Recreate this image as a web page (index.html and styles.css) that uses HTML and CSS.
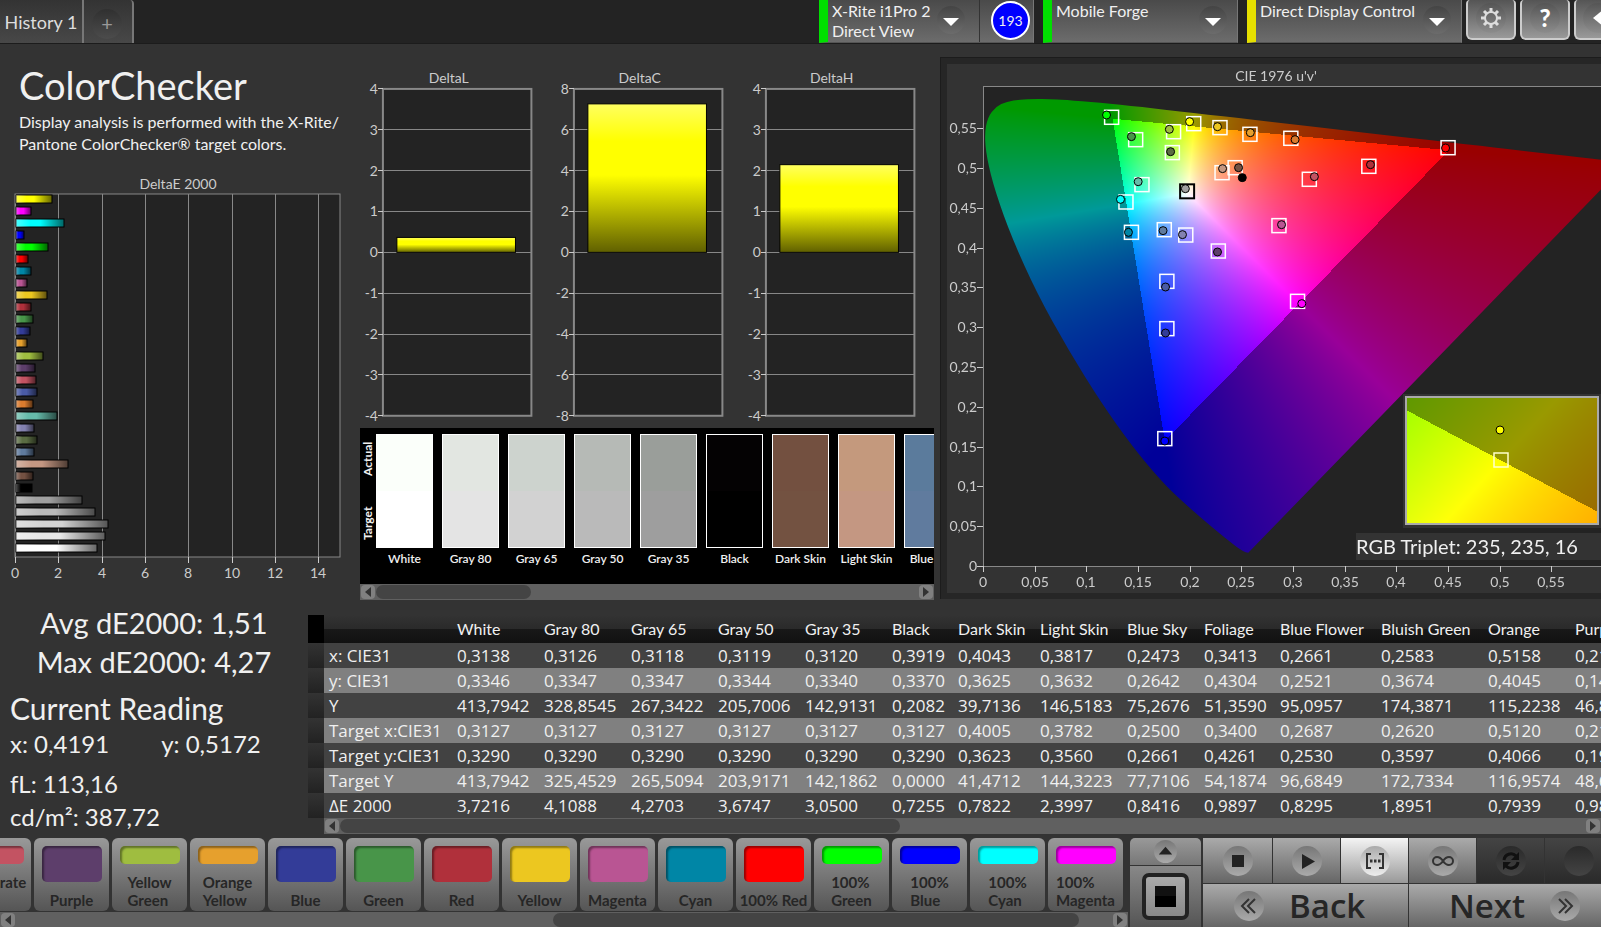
FILE: index.html
```html
<!DOCTYPE html>
<html lang="en">
<head>
    <meta charset="UTF-8">
    <meta name="viewport" content="width=device-width, initial-scale=1.0">
    <title>ColorChecker</title>
    <link rel="stylesheet" href="styles.css">
</head>
<body>

<header class="topbar">
    <nav class="tabs">
        <button class="tab">History 1</button>
        <button class="tab tab-add" aria-label="Add tab"><span class="plus">+</span></button>
    </nav>

    <div class="devices">
        <div class="device device-meter">
            <div class="device-text">
                <select class="device-select" aria-label="Meter"><option>X-Rite i1Pro 2</option></select>
                <span>Direct View</span>
            </div>
            <span class="arrow"></span>
            <div class="badge-cell"><span class="badge">193</span></div>
        </div>
        <div class="device device-source">
            <div class="device-text">
                <select class="device-select" aria-label="Source"><option>Mobile Forge</option></select>
            </div>
            <span class="arrow"></span>
        </div>
        <div class="device device-display">
            <div class="device-text">
                <select class="device-select" aria-label="Display"><option>Direct Display Control</option></select>
            </div>
            <span class="arrow"></span>
        </div>
        <div class="tools">
            <button class="tool" aria-label="Settings">
                <svg class="icon" viewBox="0 0 30 30">
                    <circle cx="15" cy="15" r="6" fill="none" stroke="#ddd" stroke-width="2"/>
                    <path d="M15 5v4M15 21v4M5 15h4M21 15h4M8 8l3 3M19 19l3 3M22 8l-3 3M11 19l-3 3" stroke="#ddd" stroke-width="3"/>
                </svg>
            </button>
            <button class="tool" aria-label="Help"><span class="icon help">?</span></button>
            <button class="tool tool-last" aria-label="Collapse">
                <svg class="icon" viewBox="0 0 30 30"><path d="M20 7v16L10 15z" fill="#fff"/></svg>
            </button>
        </div>
    </div>
</header>

<main>
    <section class="top">
        <div class="summary">
            <h1>ColorChecker</h1>
            <p>Display analysis is performed with the X-Rite/<br>Pantone ColorChecker® target colors.</p>
            <svg id="deltaE" class="chart" viewBox="0 0 360 410"></svg>
        </div>

        <div class="middle">
            <div class="deltas">
                <svg id="deltaL" class="chart" viewBox="0 0 192 356"></svg>
                <svg id="deltaC" class="chart" viewBox="0 0 192 356"></svg>
                <svg id="deltaH" class="chart" viewBox="0 0 192 356"></svg>
            </div>
            <div class="compare">
                <div class="compare-side"><span>Target</span><span>Actual</span></div>
                <div class="compare-list" id="compare"></div>
            </div>
            <div class="scrollbar">
                <button class="scroll-btn" aria-label="Scroll left"></button>
                <div class="track"><div class="thumb thumb-compare"></div></div>
                <button class="scroll-btn scroll-right" aria-label="Scroll right"></button>
            </div>
        </div>

        <div class="cie">
            <div class="cie-inner">
                <canvas id="gamut" width="654" height="529"></canvas>
                <svg id="cieChart" class="chart" viewBox="0 0 654 529"></svg>
            </div>
        </div>
    </section>

    <section class="bottom">
        <div class="readings">
            <div class="stat">Avg dE2000: 1,51</div>
            <div class="stat">Max dE2000: 4,27</div>
            <h2>Current Reading</h2>
            <div class="pair"><span>x: 0,4191</span><span>y: 0,5172</span></div>
            <div class="lum">
                <div>fL: 113,16</div>
                <div>cd/m²: 387,72</div>
            </div>
        </div>
        <div class="data">
            <div class="table-wrap">
                <table id="values"></table>
            </div>
            <div class="scrollbar scrollbar-table">
                <button class="scroll-btn" aria-label="Scroll left"></button>
                <div class="track"><div class="thumb thumb-table"></div></div>
                <button class="scroll-btn scroll-right" aria-label="Scroll right"></button>
            </div>
        </div>
    </section>
</main>

<footer class="controls">
    <div class="patches">
        <div class="patch-list" id="patches"></div>
        <div class="scrollbar">
            <button class="scroll-btn" aria-label="Scroll left"></button>
            <div class="track"><div class="thumb thumb-patches"></div></div>
            <button class="scroll-btn scroll-right" aria-label="Scroll right"></button>
        </div>
    </div>

    <div class="pattern">
        <button class="pattern-up" aria-label="Show patterns">
            <svg class="round-sm" viewBox="0 0 24 24"><path d="M5 15l7-8 7 8z" fill="#222"/></svg>
        </button>
        <button class="pattern-window" aria-label="Window pattern"><span class="window-icon"></span></button>
    </div>

    <div class="transport">
        <div class="play-row">
            <button aria-label="Stop"><svg class="round" viewBox="0 0 30 30"><path d="M9 9h12v12H9z" fill="#222"/></svg></button>
            <button aria-label="Play"><svg class="round" viewBox="0 0 30 30"><path d="M10 8l13 7.500-13 7.500z" fill="#222"/></svg></button>
            <button class="active" aria-label="Read series">
                <svg class="round" viewBox="0 0 30 30"><path d="M11 8H7v14h4M19 8h4v14h-4" fill="none" stroke="#333" stroke-width="2"/><path d="M10 15h2.500M14 15h2.500M18 15h2.500" stroke="#333" stroke-width="3"/></svg>
            </button>
            <button aria-label="Read continuously">
                <svg class="round" viewBox="0 0 30 30"><path d="M15 15c-2-3-4-4-6-4a4 4 0 0 0 0 8c2 0 4-1 6-4s4-4 6-4a4 4 0 0 1 0 8c-2 0-4-1-6-4z" fill="none" stroke="#333" stroke-width="2"/></svg>
            </button>
            <button class="off" aria-label="Refresh">
                <svg class="round" viewBox="0 0 30 30"><path d="M8 14a7 7 0 0 1 12-4M22 16a7 7 0 0 1-12 4" fill="none" stroke="#111" stroke-width="3"/><path d="M23 6v8h-8zM7 24v-8h8z" fill="#111"/></svg>
            </button>
            <button class="off" aria-label="Record"><svg class="round" viewBox="0 0 30 30"></svg></button>
        </div>
        <div class="nav-row">
            <button>
                <svg class="round" viewBox="0 0 30 30"><path d="M15 8l-7 7 7 7M21 8l-7 7 7 7" fill="none" stroke="#333" stroke-width="2"/></svg>
                Back
            </button>
            <button class="next">
                Next
                <svg class="round" viewBox="0 0 30 30"><path d="M9 8l7 7-7 7M15 8l7 7-7 7" fill="none" stroke="#333" stroke-width="2"/></svg>
            </button>
        </div>
    </div>
</footer>

<script src="script.js"></script>
</body>
</html>
```
FILE: styles.css
```css
* {
    box-sizing: border-box;
}
body {
    margin: 0;
    min-height: 100vh;
    display: flex;
    flex-direction: column;
    overflow: hidden;
    background: #333;
    color: #f0f0f0;
    font-family: Lato, sans-serif;
}
button {
    margin: 0;
    padding: 0;
    border: 0;
    font-family: inherit;
    color: inherit;
}

/* top bar */
.topbar {
    height: 44px;
    display: flex;
    justify-content: space-between;
    background: #232323;
    border-bottom: 1px solid #1c1c1c;
}
.tabs {
    display: flex;
}
.tab {
    width: 84px;
    font-size: 18px;
    white-space: nowrap;
    color: #ddd;
    background: linear-gradient(#333, #484848);
    border-right: 2px solid #777;
}
.tab-add {
    width: 50px;
    border-radius: 0 4px 0 0;
}
.plus {
    display: block;
    width: 30px;
    height: 30px;
    margin: 4px auto 0 8px;
    border-radius: 50%;
    line-height: 28px;
    font-size: 20px;
    color: #999;
    background: linear-gradient(#303030, #4c4c4c);
}
.devices {
    display: flex;
    gap: 9px;
}
.device {
    display: flex;
    height: 43px;
    padding-left: 4px;
    background: linear-gradient(#4a4a4a, #6c6c6c);
    border-left: 9px solid #00e000;
    border-right: 1px solid #777;
    border-bottom: 1px solid #555;
}
.device-meter {
    width: 215px;
}
.device-source {
    width: 195px;
}
.device-display {
    width: 215px;
    border-left-color: #e6e000;
}
.device-text {
    flex: 1;
    min-width: 0;
    font-size: 16px;
    line-height: 22px;
    white-space: nowrap;
}
.device-select {
    display: block;
    width: 100%;
    height: 20px;
    padding: 0;
    border: 0;
    appearance: none;
    background: none;
    color: inherit;
    font: inherit;
}
.arrow {
    flex: none;
    width: 28px;
    height: 28px;
    margin: 6px 10px 0 0;
    border-radius: 50%;
    background: linear-gradient(#444, #6c6c6c);
    display: flex;
    align-items: center;
    justify-content: center;
}
.arrow::after {
    content: "";
    border: 8px solid transparent;
    border-top-color: #fff;
    border-bottom: 0;
    margin-top: 3px;
}
.device-meter .arrow {
    margin-right: 14px;
}
.badge-cell {
    width: 54px;
    padding: 1px 0 0 11px;
    border-left: 1px solid #333;
}
.badge {
    display: block;
    width: 39px;
    height: 39px;
    border: 2px solid #fff;
    border-radius: 50%;
    background: #00f;
    font-size: 14px;
    line-height: 36px;
    text-align: center;
}
.tools {
    display: flex;
    gap: 4px;
    margin-left: -5px;
}
.tool {
    width: 50px;
    height: 40px;
    padding-bottom: 2px;
    border: 2px solid #ccc;
    border-top: 0;
    border-radius: 4px 4px 6px 6px;
    background: linear-gradient(#555, #999);
}
.tool-last {
    width: 27px;
    border-right: 0;
    border-radius: 4px 0 0 6px;
    overflow: hidden;
}
.icon {
    display: block;
    width: 30px;
    height: 30px;
    margin: 0 auto;
    border-radius: 50%;
    background: linear-gradient(#555, #8c8c8c);
}
.tool-last .icon {
    margin-left: 7px;
}
.help {
    font-size: 24px;
    font-weight: 900;
    line-height: 30px;
    color: #fff;
}

/* charts */
.chart {
    display: block;
    width: 100%;
}
.chart text {
    font-size: 14px;
    fill: #ccc;
}
.top {
    display: grid;
    grid-template-columns: 360px 574px minmax(0, 1fr);
    align-items: start;
}
.summary h1 {
    margin: 18px 0 0 19px;
    font-size: 38px;
    line-height: 46px;
    font-weight: 400;
}
.summary p {
    margin: 3px 0 8px 19px;
    font-size: 16px;
    line-height: 22px;
    white-space: nowrap;
}
.summary .chart {
    margin-top: 18px;
}
.deltas {
    display: grid;
    grid-template-columns: repeat(3, 1fr);
    margin-top: 24px;
    height: 360px;
}
.compare {
    display: flex;
    height: 156px;
    background: #000;
    overflow: hidden;
}
.compare-side {
    display: flex;
    flex: none;
    justify-content: space-between;
    width: 16px;
    height: 120px;
    padding: 8px 0 14px;
    writing-mode: vertical-rl;
    transform: rotate(180deg);
    font-size: 12px;
    line-height: 16px;
    font-weight: 700;
}
.compare-list {
    display: flex;
    gap: 9px;
    padding-top: 6px;
}
.compare-item {
    flex: none;
    width: 57px;
    font-size: 12px;
    line-height: 18px;
    font-weight: 600;
    text-align: center;
    white-space: nowrap;
}
.compare-color {
    height: 114px;
    margin-bottom: 2px;
    border: 1px solid #fff;
    display: flex;
    flex-direction: column;
}
.compare-color i {
    flex: 1;
}

/* scrollbars */
.scrollbar {
    display: flex;
    height: 16px;
    background: #606060;
}
.scroll-btn {
    flex: none;
    width: 14px;
    margin: 1px;
    border-radius: 4px;
    background: #808080;
}
.scroll-btn::after {
    content: "";
    display: block;
    width: 0;
    margin: 0 auto;
    border: 5px solid transparent;
    border-right: 6px solid #333;
    border-left: 0;
}
.scroll-right::after {
    border-left: 6px solid #333;
    border-right: 0;
}
.track {
    flex: 1;
    padding: 1px 0;
}
.thumb {
    height: 14px;
    border-radius: 7px;
    background: #444;
}
.thumb-compare {
    width: 155px;
}
.thumb-table {
    width: 45%;
}
.thumb-patches {
    width: 48%;
    margin-left: 49%;
}

/* CIE diagram */
.cie {
    margin: 13px 0 0 6px;
    padding: 6px 0 6px 6px;
    background: #262626;
    border-left: 1px solid #1c1c1c;
    border-top: 1px solid #1c1c1c;
}
.cie-inner {
    display: grid;
    background: #333;
}
.cie-inner canvas,
.cie-inner .chart {
    grid-area: 1 / 1;
    width: 100%;
}
.chart .triplet {
    font-size: 20px;
    fill: #f0f0f0;
}

/* readings and table */
.bottom {
    display: flex;
    margin-top: 3px;
}
.readings {
    flex: none;
    width: 308px;
    font-size: 24px;
    line-height: 33px;
    white-space: nowrap;
}
.stat {
    font-size: 29px;
    line-height: 39px;
    text-align: center;
}
.readings h2 {
    margin: 8px 0 0 10px;
    font-size: 30px;
    line-height: 38px;
    font-weight: 400;
}
.pair {
    display: flex;
    gap: 52px;
    margin-left: 10px;
}
.lum {
    margin: 7px 0 0 10px;
}
.data {
    flex: 1;
    min-width: 0;
    padding-top: 12px;
}
.table-wrap {
    overflow: hidden;
}
table {
    table-layout: fixed;
    width: 1353px;
    border-collapse: collapse;
    font-family: "Open Sans", sans-serif;
    font-size: 17px;
}
th, td {
    height: 25px;
    padding: 0;
    line-height: 24px;
    font-weight: 400;
    text-align: left;
    white-space: nowrap;
}
tbody th {
    padding-left: 5px;
}
thead th {
    height: 28px;
    font-family: Lato, sans-serif;
    font-size: 16px;
    background: linear-gradient(#333, #2a2a2a 50%, #181818 50%, #111);
}
thead .handle {
    background: #000;
}
tbody tr {
    background: #424242;
}
tbody tr:nth-child(even) {
    background: #808080;
}
.handle {
    background: linear-gradient(#333, #222);
}
.scrollbar-table {
    margin-left: 16px;
}

/* bottom controls */
.controls {
    display: flex;
    height: 89px;
    margin-top: auto;
    overflow: hidden;
    color: #262626;
}
.patches {
    flex: 1;
    min-width: 0;
}
.patch-list {
    display: flex;
    justify-content: flex-end;
    gap: 3px;
    height: 74px;
    padding-right: 5px;
    overflow: hidden;
}
.patch {
    flex: none;
    display: flex;
    flex-direction: column;
    align-items: center;
    justify-content: space-between;
    width: 75px;
    height: 73px;
    padding: 8px 0 2px;
    border-radius: 6px;
    background: linear-gradient(#999, #555);
    font-size: 15px;
    line-height: 18px;
    font-weight: 700;
    text-align: left;
    white-space: nowrap;
}
.patch-color {
    width: 60px;
    height: 36px;
    border-radius: 5px;
    box-shadow: inset 2px 2px 2px rgba(0, 0, 0, 0.4);
}
.patch-color.short {
    height: 18px;
}
.pattern {
    flex: none;
    display: flex;
    flex-direction: column;
    gap: 1px;
    width: 75px;
    padding: 0 2px;
    background: #333;
}
.pattern button {
    background: linear-gradient(#999, #777);
}
.pattern .pattern-up {
    height: 27px;
    border-radius: 5px 5px 0 0;
}
.pattern .pattern-window {
    flex: 1;
    background: linear-gradient(#888, #555);
}
.round,
.round-sm {
    display: block;
    flex: none;
    width: 30px;
    height: 30px;
    margin: 0 auto;
    border-radius: 50%;
    background: linear-gradient(#777, #aaa);
}
.round-sm {
    width: 23px;
    height: 23px;
}
.window-icon {
    display: block;
    width: 47px;
    height: 47px;
    margin: 0 auto;
    padding: 9px;
    border: 4px solid #222;
    border-radius: 7px;
    background: linear-gradient(#aaa, #888);
}
.window-icon::before {
    content: "";
    display: block;
    height: 21px;
    background: linear-gradient(#111 50%, #000 50%);
}
.transport {
    flex: none;
    width: 398px;
}
.play-row,
.nav-row {
    display: grid;
    grid-template-columns: 69px repeat(5, 67px);
    gap: 1px;
    height: 45px;
    margin-bottom: 1px;
}
.nav-row {
    grid-template-columns: 205px 205px;
    height: 43px;
}
.play-row button,
.nav-row button {
    background: linear-gradient(#aaa, #666);
}
.play-row .active {
    background: linear-gradient(#f4f4f4, #999);
}
.active .round {
    background: linear-gradient(#aaa, #eee);
}
.play-row .off {
    background: linear-gradient(#444, #2a2a2a);
}
.off .round {
    background: linear-gradient(#2a2a2a, #444);
}
.nav-row button {
    display: flex;
    align-items: center;
    gap: 25px;
    padding-left: 31px;
    font-family: "Open Sans", sans-serif;
    font-size: 33px;
    font-weight: 600;
    line-height: 40px;
}
.nav-row .round {
    margin: 0;
}
.nav-row .next {
    padding-left: 40px;
}
```
FILE: script.js
```js
const names = ["White", "Gray 80", "Gray 65", "Gray 50", "Gray 35", "Black", "Dark Skin", "Light Skin",
    "Blue Sky", "Foliage", "Blue Flower", "Bluish Green", "Orange", "Purplish Blue"];
const colWidths = [87, 87, 87, 87, 87, 66, 82, 87, 77, 76, 101, 107, 87, 110];

const rows = {
    "x: CIE31": "0,3138 0,3126 0,3118 0,3119 0,3120 0,3919 0,4043 0,3817 0,2473 0,3413 0,2661 0,2583 0,5158 0,2131",
    "y: CIE31": "0,3346 0,3347 0,3347 0,3344 0,3340 0,3370 0,3625 0,3632 0,2642 0,4304 0,2521 0,3674 0,4045 0,1479",
    "Y": "413,7942 328,8545 267,3422 205,7006 142,9131 0,2082 39,7136 146,5183 75,2676 51,3590 95,0957 174,3871 115,2238 46,8812",
    "Target x:CIE31": "0,3127 0,3127 0,3127 0,3127 0,3127 0,3127 0,4005 0,3782 0,2500 0,3400 0,2687 0,2620 0,5120 0,2146",
    "Target y:CIE31": "0,3290 0,3290 0,3290 0,3290 0,3290 0,3290 0,3623 0,3560 0,2661 0,4261 0,2530 0,3597 0,4066 0,1903",
    "Target Y": "413,7942 325,4529 265,5094 203,9171 142,1862 0,0000 41,4712 144,3223 77,7106 54,1874 96,6849 172,7334 116,9574 48,6127",
    "ΔE 2000": "3,7216 4,1088 4,2703 3,6747 3,0500 0,7255 0,7822 2,3997 0,8416 0,9897 0,8295 1,8951 0,7939 0,9804"
};

const deltaE = [
    ["#ffff00", 1.67], ["#ff00ff", 0.7], ["#00ffff", 2.2], ["#0000ff", 0.37], ["#00ff00", 1.48],
    ["#ff0000", 0.56], ["#0086a6", 0.71], ["#b95593", 0.53], ["#ecc720", 1.44], ["#b0303b", 0.7],
    ["#489549", 0.8], ["#333c98", 0.65], ["#e6a02d", 0.5], ["#9fbd40", 1.25], ["#5d3e6b", 0.9],
    ["#c35362", 0.93], ["#4a5ba5", 0.98], ["#da7b2e", 0.79], ["#66bbaa", 1.9], ["#8381b0", 0.83],
    ["#5a6c43", 0.99], ["#607b9e", 0.84], ["#c49782", 2.4], ["#745142", 0.78], ["#000000", 0.73],
    ["#a0a0a0", 3.05], ["#bababa", 3.67], ["#d2d2d2", 4.27], ["#e6e6e6", 4.11], ["#ffffff", 3.72]
];

const compare = [
    ["White", "#fbfffa", "#ffffff"], ["Gray 80", "#e2e6e1", "#e4e4e4"], ["Gray 65", "#cdd3ce", "#d2d2d2"],
    ["Gray 50", "#b6bab6", "#bababa"], ["Gray 35", "#9a9e9a", "#9e9e9e"], ["Black", "#040203", "#000000"],
    ["Dark Skin", "#735040", "#735241"], ["Light Skin", "#c4997d", "#c49782"], ["Blue Sky", "#5b7b9c", "#607b9e"]
];

const patches = [
    ["Moderate<br>Red", "#c35362"], ["Purple", "#5d3e6b"], ["Yellow<br>Green", "#9fbd40"],
    ["Orange<br>Yellow", "#e6a02d"], ["Blue", "#333c98"], ["Green", "#489549"], ["Red", "#b0303b"],
    ["Yellow", "#ecc720"], ["Magenta", "#b95593"], ["Cyan", "#0086a6"], ["100% Red", "#ff0000"],
    ["100%<br>Green", "#00ff00"], ["100%<br>Blue", "#0000ff"], ["100%<br>Cyan", "#00ffff"],
    ["100%<br>Magenta", "#ff00ff"]
];

const targets = [
    [.1245, .5637], [.204, .5557], [.1845, .5456], [.2294, .5507], [.2584, .5423], [.298, .5373],
    [.4502, .5255], [.1478, .5356], [.1833, .5193], [.2314, .4941], [.2441, .5004], [.3159, .4858],
    [.3735, .5021], [.1539, .4791], [.1384, .4573], [.1437, .4192], [.1755, .4225], [.1963, .4158],
    [.2278, .3957], [.2865, .4276], [.3045, .3325], [.178, .3576], [.178, .2982], [.176, .16]
];

const measured = [
    [.1196, .5666, "#00ff00"], [.2, .5582, "#ffff00"], [.1804, .5486, "#9fbd40"], [.227, .5519, "#ecc720"],
    [.2588, .5444, "#e6a02d"], [.3021, .5356, "#da7b2e"], [.4478, .5251, "#ff0000"], [.1437, .5394, "#489549"],
    [.1816, .5205, "#5a6c43"], [.2319, .4992, "#c49782"], [.2474, .5004, "#745142"], [.251, .4879, "#000000"],
    [.1959, .474, "#a0a0a0"], [.3208, .4891, "#c35362"], [.3751, .5042, "#b0303b"], [.1502, .4828, "#66bbaa"],
    [.1331, .4606, "#00ffff"], [.1408, .4192, "#0086a6"], [.1743, .4213, "#607b9e"], [.1931, .4163, "#8381b0"],
    [.227, .3945, "#5d3e6b"], [.289, .4288, "#b95593"], [.3086, .3296, "#ff00ff"], [.1767, .3505, "#4a5ba5"],
    [.1767, .2927, "#333c98"], [.176, .157, "#0000ff"]
];

// spectral locus, x y pairs
const locus = [
    [.1741, .005], [.1714, .0051], [.1644, .0109], [.1566, .0177], [.144, .0297], [.1355, .0399],
    [.1241, .0578], [.1096, .0868], [.0913, .1327], [.0687, .2007], [.0454, .295], [.0235, .4127],
    [.0082, .5384], [.0039, .6548], [.0139, .7502], [.0389, .812], [.0743, .8338], [.1142, .8262],
    [.1547, .8059], [.1929, .7816], [.2296, .7543], [.3016, .6923], [.3731, .6245], [.4441, .5547],
    [.5125, .4866], [.5752, .4242], [.627, .3725], [.6658, .334], [.6915, .3083], [.719, .2809], [.7347, .2653]
];

const get = id => document.getElementById(id);
const line = (x1, y1, x2, y2, color) => `<path d="M${x1} ${y1}L${x2} ${y2}" stroke="${color}" shape-rendering="crispEdges"/>`;
const text = (x, y, anchor, value) => `<text x="${x}" y="${y}" text-anchor="${anchor}">${value}</text>`;

function drawDeltaE() {
    const left = 15, top = 21, width = 325, height = 363, unit = 21.65;
    let s = text(178, 16, "middle", "DeltaE 2000");
    s += `<rect x="${left}" y="${top}" width="${width}" height="${height}" fill="#232323" stroke="#888"/>`;
    for (let v = 0; v <= 14; v += 2) {
        const x = Math.round(left + v * unit);
        s += line(x, top, x, top + height, "#888") + line(x, top + height, x, top + height + 6, "#ccc");
        s += text(x, top + height + 21, "middle", v);
    }
    deltaE.forEach(([color, value], i) => {
        const y = Math.round(top + 1 + i * 12.04), w = Math.round(value * unit);
        s += `<linearGradient id="e${i}"><stop offset="0" stop-color="#fff" stop-opacity=".3"/><stop offset=".3" stop-color="#fff" stop-opacity="0"/><stop offset=".5" stop-color="#000" stop-opacity="0"/><stop offset="1" stop-color="#000" stop-opacity=".6"/></linearGradient>`;
        s += `<rect x="16" y="${y}" width="${w}" height="8" fill="${color}" stroke="#000"/>`;
        s += `<rect x="16" y="${y}" width="${w}" height="8" fill="url(#e${i})"/>`;
    });
    get("deltaE").innerHTML = s;
}

function drawDelta(id, title, step, value) {
    const left = 23, top = 21, width = 149, row = 41;
    let s = `<linearGradient id="y${id}" x2="0" y2="1"><stop offset="0" stop-color="#ffff60"/><stop offset=".25" stop-color="#ff0"/><stop offset=".48" stop-color="#ff0"/><stop offset="1" stop-color="#606000"/></linearGradient>`;
    s += text(89, 15, "middle", title);
    s += `<rect x="${left}" y="${top}" width="${width}" height="${row * 8}" fill="#232323" stroke="#888" stroke-width="2"/>`;
    for (let i = 0; i <= 8; i++) {
        const y = top + i * row;
        s += line(left, y, left + width, y, "#888") + line(left - 5, y, left, y, "#ccc");
        s += text(left - 5, y + 5, "end", (4 - i) * step);
    }
    const h = Math.round(value / step * row);
    s += `<rect x="${left + 14}" y="${top + row * 4 - h}" width="119" height="${h}" fill="url(#y${id})" stroke="#000"/>`;
    get(id).innerHTML = s;
}

const X0 = 36, Y0 = 502, US = 1033, VS = 796;
const px = u => X0 + u * US;
const py = v => Y0 - v * VS;

// u'v' to display RGB, dimmed outside of Rec. 709
function uvColor(u, v) {
    const X = 9 * u / (4 * v), Z = (12 - 3 * u - 20 * v) / (4 * v);
    const rgb = [
        3.2406 * X - 1.5372 - 0.4986 * Z,
        -0.9689 * X + 1.8758 + 0.0415 * Z,
        0.0557 * X - 0.2040 + 1.0570 * Z
    ];
    const max = Math.max(...rgb), dim = Math.min(...rgb) < 0 ? 0.6 : 1;
    return rgb.map(c => 255 * dim * Math.pow(Math.max(0, c / max), 0.85));
}

function drawGamut() {
    const ctx = get("gamut").getContext("2d");
    const fill = (x, y, w, h, toUv) => {
        const c = document.createElement("canvas");
        c.width = w;
        c.height = h;
        const cx = c.getContext("2d"), img = cx.createImageData(w, h);
        for (let j = 0; j < h; j++) {
            for (let i = 0; i < w; i++) {
                img.data.set([...uvColor(...toUv(x + i, y + j)), 255], (j * w + i) * 4);
            }
        }
        cx.putImageData(img, 0, 0);
        ctx.drawImage(c, x, y);
    };

    ctx.fillStyle = "#232323";
    ctx.fillRect(X0, 22, 654 - X0, Y0 - 22);

    ctx.save();
    ctx.beginPath();
    const p = locus.map(([x, y]) => {
        const d = -2 * x + 12 * y + 3;
        return [px(4 * x / d), py(9 * y / d)];
    });
    ctx.moveTo(...p[0]);
    for (let i = 1; i < p.length - 1; i++) {
        ctx.quadraticCurveTo(p[i][0], p[i][1], (p[i][0] + p[i + 1][0]) / 2, (p[i][1] + p[i + 1][1]) / 2);
    }
    ctx.lineTo(...p[p.length - 1]);
    ctx.closePath();
    ctx.clip();
    fill(X0, 22, 654 - X0, Y0 - 22, (x, y) => [(x - X0) / US, Math.max(0.001, (Y0 - y) / VS)]);
    ctx.restore();

    // magnified view round the selected colour
    ctx.fillStyle = "#333";
    ctx.fillRect(456, 330, 198, 134);
    fill(459, 333, 192, 127, (x, y) => {
        const dx = x - 554, dy = y - 396;
        const det = 192 * -60 - 55 * 100;
        const a = (dx * -60 - 55 * dy) / det, b = (192 * dy - 100 * dx) / det;
        return [0.204 + a * 0.053 + b * 0.0002, 0.5529 - a * 0.0064 + b * 0.002];
    });
}

function drawCie() {
    let s = text(329, 17, "middle", "CIE 1976 u'v'");
    s += line(X0, 22, 654, 22, "#888") + line(X0, 22, X0, Y0, "#888") + line(X0, Y0, 654, Y0, "#888");
    for (let i = 0; i <= 11; i++) {
        const label = String(i * 5 / 100).replace(".", ",");
        const x = Math.round(px(i * 0.05)), y = Math.round(py(i * 0.05));
        s += line(x, Y0, x, Y0 + 6, "#ccc") + text(x, Y0 + 21, "middle", label);
        s += line(X0 - 6, y, X0, y, "#ccc") + text(X0 - 6, y + 5, "end", label);
    }
    const square = (x, y, color, w) => `<rect x="${x - 7}" y="${y - 7}" width="14" height="14" fill="none" stroke="${color}" stroke-width="${w}"/>`;
    const dot = (x, y, color) => `<circle cx="${x}" cy="${y}" r="4" fill="${color}" stroke="#000"/>`;
    targets.forEach(([u, v]) => s += square(px(u), py(v), "#fff", 1.5));
    s += square(px(.1976), py(.4707), "#000", 2);
    measured.forEach(([u, v, color]) => s += dot(px(u), py(v), color));
    s += `<rect x="459" y="333" width="192" height="127" fill="none" stroke="#aaa" stroke-width="2"/>`;
    s += square(554, 396, "#ffc", 1.5) + dot(553, 366, "#ff0");
    s += `<rect x="409" y="469" width="245" height="27" fill="#333"/>`;
    s += `<text class="triplet" x="409" y="490">RGB Triplet: 235, 235, 16</text>`;
    get("cieChart").innerHTML = s;
}

function buildTable() {
    let s = `<colgroup><col style="width:16px"><col style="width:133px">`;
    s += colWidths.map(w => `<col style="width:${w}px">`).join("") + "</colgroup>";
    s += `<thead><tr><th class="handle"></th><th></th>${names.map(n => `<th scope="col">${n}</th>`).join("")}</tr></thead><tbody>`;
    for (const label in rows) {
        s += `<tr><td class="handle"></td><th scope="row">${label}</th>`;
        s += rows[label].split(" ").map(v => `<td>${v}</td>`).join("") + "</tr>";
    }
    get("values").innerHTML = s + "</tbody>";
}

get("compare").innerHTML = compare.map(([name, actual, target]) =>
    `<div class="compare-item"><div class="compare-color"><i style="background:${actual}"></i><i style="background:${target}"></i></div>${name}</div>`
).join("");

get("patches").innerHTML = patches.map(([name, color]) =>
    `<button class="patch"><span class="patch-color${name.includes("<br>") ? " short" : ""}" style="background:${color}"></span><span>${name}</span></button>`
).join("");

drawDeltaE();
drawDelta("deltaL", "DeltaL", 1, 0.36);
drawDelta("deltaC", "DeltaC", 2, 7.26);
drawDelta("deltaH", "DeltaH", 1, 2.14);
drawGamut();
drawCie();
buildTable();
```
